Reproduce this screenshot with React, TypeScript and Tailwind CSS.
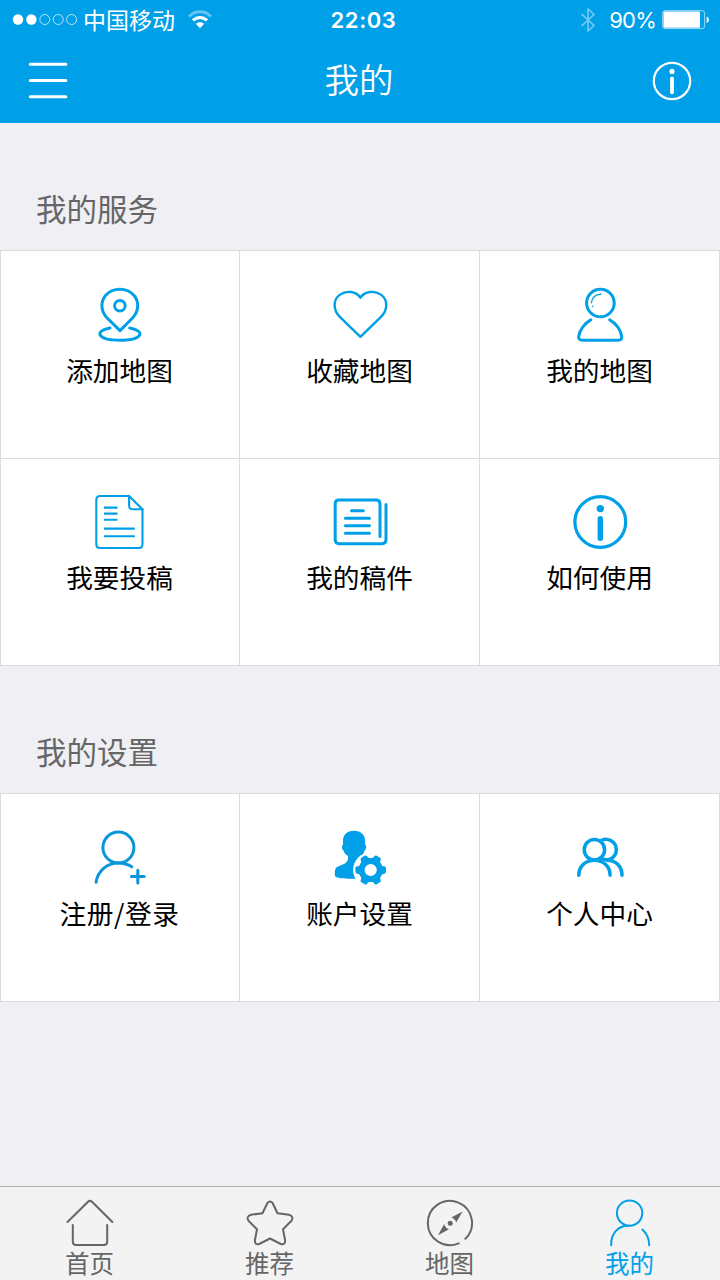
import type { ReactNode } from "react"

const IconPin = () => (
    <>
        <path d="M30 45.6 L16.6 32.5 C9.9 24.8 11 15.6 15.8 10.2 C22.8 2.2 36.9 2.2 43.8 10.2 C48.6 15.6 49.7 24.8 43 32.5 Z" />
        <circle cx="29.9" cy="20.8" r="5.3" />
        <path d="M19.9 43 C3.9 46 6.9 55.2 30 55.2 S55.9 46 39.7 43" />
    </>
)

const IconHeart = () => (
    <path strokeWidth="2.4" d="M30.4 51.8 L9.8 31.8 C2.7 24.6 3.2 14.6 9.7 9.9 C16.2 5.1 26.2 6.1 30.4 12.7 C34.6 6.1 44.6 5.1 51.2 9.9 C57.7 14.6 58.2 24.6 51 31.8 Z" />
)

const IconPerson = () => (
    <>
        <circle cx="30.4" cy="18" r="13.8" />
        <path strokeWidth="1.4" d="M30.7 9.2 C25.5 9.2 21.6 13 21.5 17.8" />
        <circle cx="22.5" cy="21.3" r=".3" strokeWidth="1" />
        <path d="M20.8 34.8 C13.8 38.5 9.3 46 8.7 51.5 Q8.5 55.2 12.3 55.2 H48.3 Q52.1 55.2 51.7 51.5 C51.1 46 46.8 38.5 39.7 34.8" />
    </>
)

const IconDoc = () => (
    <g strokeWidth="2.1">
        <path d="M39.1 4 H10.1 Q6.3 4 6.3 7.8 V52.2 Q6.3 56 10.1 56 H48.8 Q52.5 56 52.5 52.2 V17.3 Z" />
        <path d="M39.1 4 V13.7 Q39.1 17.3 42.8 17.3 H52.5" />
        <path strokeLinecap="butt" d="M14 15.6 H27.5 M14 21.6 H27.5 M14 27.7 H27.5 M14 36.6 H44.8 M14 44.3 H44.8" />
    </g>
)

const IconNews = () => (
    <>
        <path d="M50 44.5 V12 Q50 8.1 46 8.1 H9 Q5.2 8.1 5.2 12 V47.8 Q5.2 51.7 9 51.7 H52 Q56 51.7 56 47.8 V12.5" />
        <path d="M21.5 18.7 H33.3 M15.4 26.3 H39.5 M15.4 33.7 H39.5 M15.4 41.2 H39.5" />
    </>
)

const IconInfo = () => (
    <>
        <circle cx="30.3" cy="30" r="25.4" strokeWidth="3.2" />
        <circle cx="30.3" cy="16.6" r="3.7" fill="currentColor" stroke="none" />
        <path strokeWidth="5.4" d="M30.3 26.7 V46.2" />
    </>
)

const IconRegister = () => (
    <g className="text-[#0b95dc]" stroke="currentColor">
        <circle cx="28.4" cy="19.6" r="15.5" />
        <path d="M6.1 54.2 C7.8 43 16.8 35 28.5 35 C33.8 35 38.3 36.5 41.8 38.8" />
        <path d="M41.4 48.6 H54.2 M47.8 42.3 V55" />
    </g>
)

const IconAccount = () => (
    <g fill="currentColor" stroke="none">
        <path d="M23.9 2.7 C31.2 2.7 35.2 7 35.2 13.5 L35.2 17 C37 17.8 36.2 21.5 34.5 22.8 C33.7 26 32.2 27.5 31.2 29 V33 L33 50.8 H24.3 C16 50.8 9.5 50.3 6.5 49.3 Q4.8 48.8 4.8 47 C4.8 42.5 5 40 7.5 38.7 C12 36.3 18 36 18 30 V28 C15.4 26.5 14.2 25 13.5 22.5 C11.8 21.5 11.4 18 13 16.7 L13 13 C12.8 7 16.7 2.7 23.9 2.7 Z" />
        <circle cx="40.7" cy="42" r="17.6" className="text-white" fill="currentColor" />
        <circle cx="40.7" cy="42" r="9" fill="none" stroke="currentColor" strokeWidth="5.8" />
        {[0, 60, 120, 180, 240, 300].map((angle) => (
            <path
                key={angle}
                transform={`rotate(${angle} 40.7 42)`}
                d="M50.5 35.2 C51.5 37.6 52.3 38.2 54.3 38.3 Q56 38.5 56 40.2 V43.8 Q56 45.5 54.3 45.7 C52.3 45.8 51.5 46.4 50.5 48.8 Z"
            />
        ))}
    </g>
)

const IconPeople = () => (
    <g strokeWidth="3.5">
        <circle cx="24.4" cy="21.8" r="10.2" />
        <path d="M8.8 47.2 C8.8 38.5 15.1 32.2 24.4 32.2 S40.1 38.5 40.1 47.2" />
        <path d="M30.8 12.8 C37 9.2 46.3 13 46.3 21.8 C46.3 29.2 39 33.7 32.1 30.7" />
        <path d="M37.1 32.2 C46.1 32.2 52 38.5 52 47.2" />
    </g>
)

const TabHome = () => (
    <path d="M1.5 23 L22 2.7 Q24 1 26 2.7 L46.4 23 M6.8 26 V42.5 Q6.8 46 10.2 46 H37.8 Q41.2 46 41.2 42.5 V26" />
)

const TabStar = () => (
    <path d="M21.3 4.2 Q24 .6 26.7 4.2 L31.5 14.2 L43 15.8 Q48.2 17.3 45.5 21.8 L37 30.3 L39.1 41.3 Q39.3 46.3 34.8 45 L24 39.5 L13.2 45 Q8.7 46.3 8.9 41.3 L11 30.3 L2.5 21.8 Q-.2 17.3 5 15.8 L16.5 14.2 Z" />
)

const TabCompass = () => (
    <>
        <path d="M39.4 39.8 A22.1 22.1 0 1 0 32.7 44.3" />
        <g fill="currentColor" stroke="none">
            <path d="M36.6 12.4 L25.3 18.4 Q29.2 19.6 30.2 23.6 Z" />
            <path d="M12 36.3 L18.2 25 Q19 29 23 30.2 Z" />
            <circle cx="24.2" cy="24.3" r="2.5" />
        </g>
    </>
)

const TabMe = () => (
    <>
        <circle cx="23.6" cy="14.1" r="12.7" />
        <path d="M5.2 46.3 C4.7 33.8 12.7 26.8 22 26.8 M36.4 30.6 C40.7 34.5 43.2 40 43.2 46.3" />
    </>
)

type Item = { label: string; icon: ReactNode }

const services: Item[] = [
    { label: "添加地图", icon: <IconPin /> },
    { label: "收藏地图", icon: <IconHeart /> },
    { label: "我的地图", icon: <IconPerson /> },
    { label: "我要投稿", icon: <IconDoc /> },
    { label: "我的稿件", icon: <IconNews /> },
    { label: "如何使用", icon: <IconInfo /> },
]

const settings: Item[] = [
    { label: "注册/登录", icon: <IconRegister /> },
    { label: "账户设置", icon: <IconAccount /> },
    { label: "个人中心", icon: <IconPeople /> },
]

const tabs: Item[] = [
    { label: "首页", icon: <TabHome /> },
    { label: "推荐", icon: <TabStar /> },
    { label: "地图", icon: <TabCompass /> },
    { label: "我的", icon: <TabMe /> },
]

const StatusBar = () => (
    <div className="flex h-10 items-center justify-between pl-3 pr-[11px]">
        <div className="flex w-[260px] items-center">
            <svg width="66" height="12" viewBox="0 0 66 12" fill="none" stroke="white">
                <circle cx="6" cy="5.5" r="5.2" fill="white" stroke="none" />
                <circle cx="19.4" cy="5.5" r="5.2" fill="white" stroke="none" />
                <circle cx="32.8" cy="5.5" r="5" strokeWidth=".7" />
                <circle cx="46.2" cy="5.5" r="5" strokeWidth=".7" />
                <circle cx="59.6" cy="5.5" r="5" strokeWidth=".7" />
            </svg>
            <span className="ml-[5px] pb-0.5 text-[23px] leading-[38px]">中国移动</span>
            <svg className="ml-[13px]" width="24" height="20" viewBox="0 0 24 20" fill="none" stroke="white" strokeWidth="3">
                <path d="M1.2 6.4 C7 .2 17 .2 22.8 6.4" opacity=".4" />
                <path d="M5 10.4 C9 6.4 15 6.4 19 10.4" />
                <path d="M12 18.2 L7.8 13.8 C10 11.6 14 11.6 16.2 13.8 Z" fill="white" stroke="none" />
            </svg>
        </div>
        <span className="pl-1.5 font-[Inter] text-[22px] font-semibold tracking-[0.6px]">22:03</span>
        <div className="flex w-[260px] items-center justify-end">
            <svg width="16" height="26" viewBox="0 0 16 26" fill="none" stroke="white" strokeWidth="1.6" opacity=".45">
                <path d="M1.5 6.8 L14 18.5 L8 24 V2 L14 7.5 L1.5 19.2" />
            </svg>
            <span className="ml-[13px] font-[Inter] text-[22px] tracking-[-0.8px]">90%</span>
            <svg className="ml-1.5" width="47" height="20" viewBox="0 0 47 20" fill="none">
                <rect x=".6" y=".6" width="42" height="18" rx="2.5" stroke="white" strokeWidth="1" opacity=".6" />
                <rect x="1.5" y="1.5" width="36.5" height="16.2" rx="1" fill="white" />
                <path d="M44.6 6.5 Q47 7.5 47 9.8 T44.6 13 Z" fill="white" />
            </svg>
        </div>
    </div>
)

const Section = ({ title, items }: { title: string; items: Item[] }) => (
    <section>
        <h2 className="flex h-[127px] items-end px-9 pb-5 text-[30.5px] leading-[44px] text-[#666]">{title}</h2>
        <div className="grid grid-cols-[239px_240px_240px] border-l border-t border-[#dcdcde] bg-white">
            {items.map((item) => (
                <button
                    key={item.label}
                    className="flex h-[207.5px] flex-col items-center border-b border-r border-[#dcdcde] pt-[34px] nth-[n+4]:pt-[33px] nth-[3n+1]:pr-px"
                >
                    <svg
                        className="text-[#00a0e9]"
                        width="60"
                        height="60"
                        viewBox="0 0 60 60"
                        fill="none"
                        stroke="currentColor"
                        strokeWidth="3"
                        strokeLinecap="round"
                        strokeLinejoin="round"
                    >
                        {item.icon}
                    </svg>
                    <span className={`mt-[5px] text-[26.7px] leading-10 text-black ${item.label.includes("/") ? "tracking-[0.6px]" : ""}`}>
                        {item.label}
                    </span>
                </button>
            ))}
        </div>
    </section>
)

const App = () => {
    return (
        <div className="flex h-[1280px] w-[720px] flex-col overflow-hidden bg-[#efeff4] font-['Noto_Sans_CJK_SC',sans-serif]">
            <header className="h-[123px] bg-[#00a0e9] text-white">
                <StatusBar />
                <div className="flex h-[82px] items-center justify-between px-7">
                    <svg width="40" height="38" viewBox="0 0 40 38" stroke="white" strokeWidth="3" strokeLinecap="round">
                        <path d="M2.3 2.2 H37.9 M2.3 18.6 H37.9 M2.3 34.8 H37.9" />
                    </svg>
                    <h1 className="pb-1 pr-0.5 text-[34.5px] font-[350]">我的</h1>
                    <svg width="40" height="40" viewBox="0 0 40 40" fill="none" stroke="white" strokeLinecap="round">
                        <circle cx="20" cy="20" r="18.2" strokeWidth="2.2" />
                        <circle cx="20" cy="10.4" r="2.6" fill="white" stroke="none" />
                        <path d="M20 17.5 V31.3" strokeWidth="3.8" />
                    </svg>
                </div>
            </header>

            <main className="flex-1">
                <Section title="我的服务" items={services} />
                <Section title="我的设置" items={settings} />
            </main>

            {/* Tab bar */}
            <nav className="grid h-[94px] grid-cols-4 border-t-[1.5px] border-[#b0b0b2] bg-[#f3f3f3]">
                {tabs.map((tab) => (
                    <button
                        key={tab.label}
                        className={`flex flex-col items-center pt-3 pr-px ${tab.label === "我的" ? "text-[#00a0e9]" : "text-[#666]"}`}
                    >
                        <svg
                            width="48"
                            height="48"
                            viewBox="0 0 48 48"
                            fill="none"
                            stroke="currentColor"
                            strokeWidth="2"
                            strokeLinecap="round"
                            strokeLinejoin="round"
                        >
                            {tab.icon}
                        </svg>
                        <span className="text-[24.5px] leading-8">{tab.label}</span>
                    </button>
                ))}
            </nav>
        </div>
    )
}

export default App
